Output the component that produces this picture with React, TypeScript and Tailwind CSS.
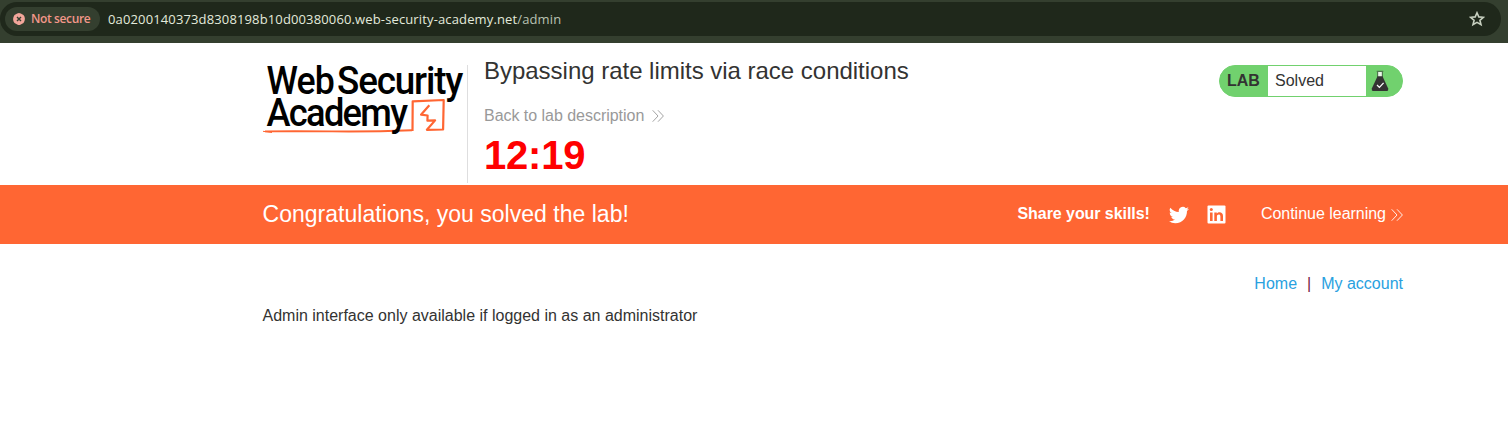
import React from "react";

function Chevrons({ className }: { className: string }) {
  return (
    <svg viewBox="0 0 12 12" width="12" height="12" fill="none" stroke="currentColor" strokeWidth="0.9" className={className}>
      <path d="M0.7 0.3 6 6 0.7 11.7M6 0.3 11.4 6 6 11.7" />
    </svg>
  );
}

function AddressBar() {
  return (
    <div className="flex h-[43px] items-start bg-[#343f2f] pt-[2px] pr-[7px]">
      <div className="flex h-[34px] w-full items-center rounded-full bg-[#1f281b] pr-[16px] pl-[5px] font-['Open_Sans','Noto_Sans',sans-serif]">
        <div className="flex h-6 w-[95px] shrink-0 items-center rounded-full bg-[#343f2f] pl-2">
          <svg width="12" height="12" viewBox="0 0 12 12" className="shrink-0">
            <path d="M4.2.6Q6-.6 7.8.6L10.5 2Q12 3.800 11.900 6T10.500 10L7.800 11.400Q6 12.600 4.200 11.400L1.500 10Q0 8.200.1 6T1.500 2Z" fill="#f3a69b" />
            <path d="m4 4 4 4m0-4L4 8" stroke="#343f2f" strokeWidth="1.4" />
          </svg>
          <span className="ml-[6px] text-[12px] leading-6 font-semibold tracking-[-0.38px] whitespace-nowrap text-[#f3978a]">Not secure</span>
        </div>
        <span className="ml-2 text-[13px] leading-6 tracking-[0.135px] whitespace-nowrap text-[#e3eadc]">
          0a0200140373d8308198b10d00380060.web-security-academy.net<span className="text-[#b9c2b2]">/admin</span>
        </span>
        <svg width="16" height="16" viewBox="0 0 16 16" className="ml-auto" fill="none" stroke="#c7d0c0" strokeWidth="1.6">
          <path d="m8 1.800 1.800 4.100 4.600.4-3.500 3 1.100 4.400L8 11.400l-4 2.300 1.100-4.400-3.500-3 4.600-.4Z" />
        </svg>
      </div>
    </div>
  );
}

function Logo() {
  return (
    <svg width="205" height="80" viewBox="0 0 205 80" className="shrink-0">
      <g fill="#000" className="font-['Roboto',sans-serif] text-[38px] font-medium">
        <text transform="translate(4.500 35.500) scale(.94 1)" className="tracking-[-1px]">Web</text>
        <text transform="translate(75 35.500) scale(.97 1)" className="tracking-[-1.200px]">Security</text>
      </g>
      <g fill="none" stroke="#ff6633" strokeLinejoin="round">
        <path d="M3 73.400Q30 73 70 73.400T150 72.300" strokeWidth="1.900" />
        <path d="M1 73.300 10 74.500" strokeWidth="1" />
        <path d="m150.500 73 .2-29.700 31-1.300-.6 29.500-16.200.3 8.200-9.400-7.700.3.200-5.200-6.600-.8 8.300-9.500" strokeWidth="2.200" />
      </g>
      <text transform="translate(4.500 68) scale(.955 1)" fill="#000" className="font-['Roboto',sans-serif] text-[38px] font-medium tracking-[-1.800px]">Academy</text>
    </svg>
  );
}

function LabStatus() {
  return (
    <div className="mt-[22px] flex h-8 w-[184px] shrink-0 items-stretch overflow-hidden rounded-full border border-[#71d16e] bg-[#71d16e] text-[16px] leading-[30px] text-[#333332]">
      <span className="w-12 pl-[7px] font-bold">LAB</span>
      <span className="w-[98px] bg-white pl-[7px]">Solved</span>
      <svg width="18" height="22" viewBox="0 0 18 22" className="mt-1 ml-[5px]">
        <path d="M7 2h4v5H7Z" fill="#e8f8e7" />
        <path d="M5.700 1.300h6.600M6.700 2v5M11.300 2v5" stroke="#333332" strokeWidth=".7" />
        <path d="M6.500 6.300h5l5.700 12.200Q17.600 21 16 21H2Q.4 21 .8 18.500Z" fill="#333332" />
        <path d="m6 15 2.400 2.400 4.200-4.500" fill="none" stroke="#fff" strokeWidth="1.300" />
      </svg>
    </div>
  );
}

function Header() {
  return (
    <header className="flex h-[142px] items-start pl-[262px]">
      <div className="mt-[22px] flex h-[118px] w-[206px] border-r border-[#dededf]">
        <div className="-mt-[7px]"><Logo /></div>
      </div>
      <div className="ml-4 flex w-[735px] flex-col">
        <h2 className="mt-[12px] text-[24px] leading-8 tracking-[-0.02px] text-[#333332]">Bypassing rate limits via race conditions</h2>
        <a className="mt-[17px] flex items-center text-[16px] leading-6 tracking-[-0.03px] text-[#999999]">
          Back to lab description
          <Chevrons className="-mt-px ml-[8px]" />
        </a>
        <p className="mt-1 text-[40px] leading-[46px] font-bold tracking-[-0.2px] text-[#ff0000]">12:19</p>
      </div>
      <LabStatus />
    </header>
  );
}

function Banner() {
  return (
    <section className="flex h-[59px] items-center bg-[#ff6633] pr-[105px] pb-[2px] pl-[262.5px] text-[16px] text-white">
      <h4 className="w-[755px] text-[23px] leading-8 tracking-[0.02px]">Congratulations, you solved the lab!</h4>
      <span className="w-[151px] font-bold tracking-[-0.06px]">Share your skills!</span>
      <svg width="20" height="20" viewBox="0 0 24 24" fill="currentColor" className="mt-[3px]">
        <path d="M23.950 4.570a10 10 0 0 1-2.820.780 4.960 4.960 0 0 0 2.160-2.730c-.950.560-2 .960-3.130 1.190a4.920 4.920 0 0 0-8.380 4.480C7.690 8.100 4.070 6.130 1.640 3.160a4.920 4.920 0 0 0 1.520 6.570 4.900 4.900 0 0 1-2.230-.610v.060a4.920 4.920 0 0 0 3.950 4.830 5 5 0 0 1-2.210.080 4.940 4.940 0 0 0 4.600 3.420A9.870 9.870 0 0 1 0 19.540a13.990 13.990 0 0 0 7.550 2.210c9.140 0 14.310-7.720 14.010-14.630a10 10 0 0 0 2.390-2.550Z" />
      </svg>
      <svg width="19" height="19" viewBox="0 0 19 19" className="mt-[2px] ml-[18.500px]">
        <rect x=".5" y=".5" width="18" height="18" rx="1" fill="#fff" />
        <path d="M3 7.500h2.600V16H3ZM7.300 7.500h2.500v1.200c1.600-2.300 6.200-2 6.200 2.300v5h-2.600v-4.500c0-2.700-3.500-2.400-3.500 0V16H7.300Z" fill="#ff6633" />
        <circle cx="4.300" cy="4.600" r="1.500" fill="#ff6633" />
      </svg>
      <a className="ml-auto flex items-center tracking-[-0.02px]">
        Continue learning
        <Chevrons className="mt-[3px] ml-[5px]" />
      </a>
    </section>
  );
}

export default function App() {
  return (
    <div className="h-[446px] overflow-hidden bg-white font-['Liberation_Sans',Arial,sans-serif]">
      <AddressBar />
      <Header />
      <Banner />
      <main className="pt-[28px] pr-[105px] pl-[262.5px] text-[16px] text-[#333332]">
        <nav className="flex justify-end gap-[10px] leading-6 text-[#29a1df]">
          <a>Home</a>
          <span className="text-[#771d43]">|</span>
          <a>My account</a>
        </nav>
        <p className="mt-2 leading-6">Admin interface only available if logged in as an administrator</p>
      </main>
    </div>
  );
}
